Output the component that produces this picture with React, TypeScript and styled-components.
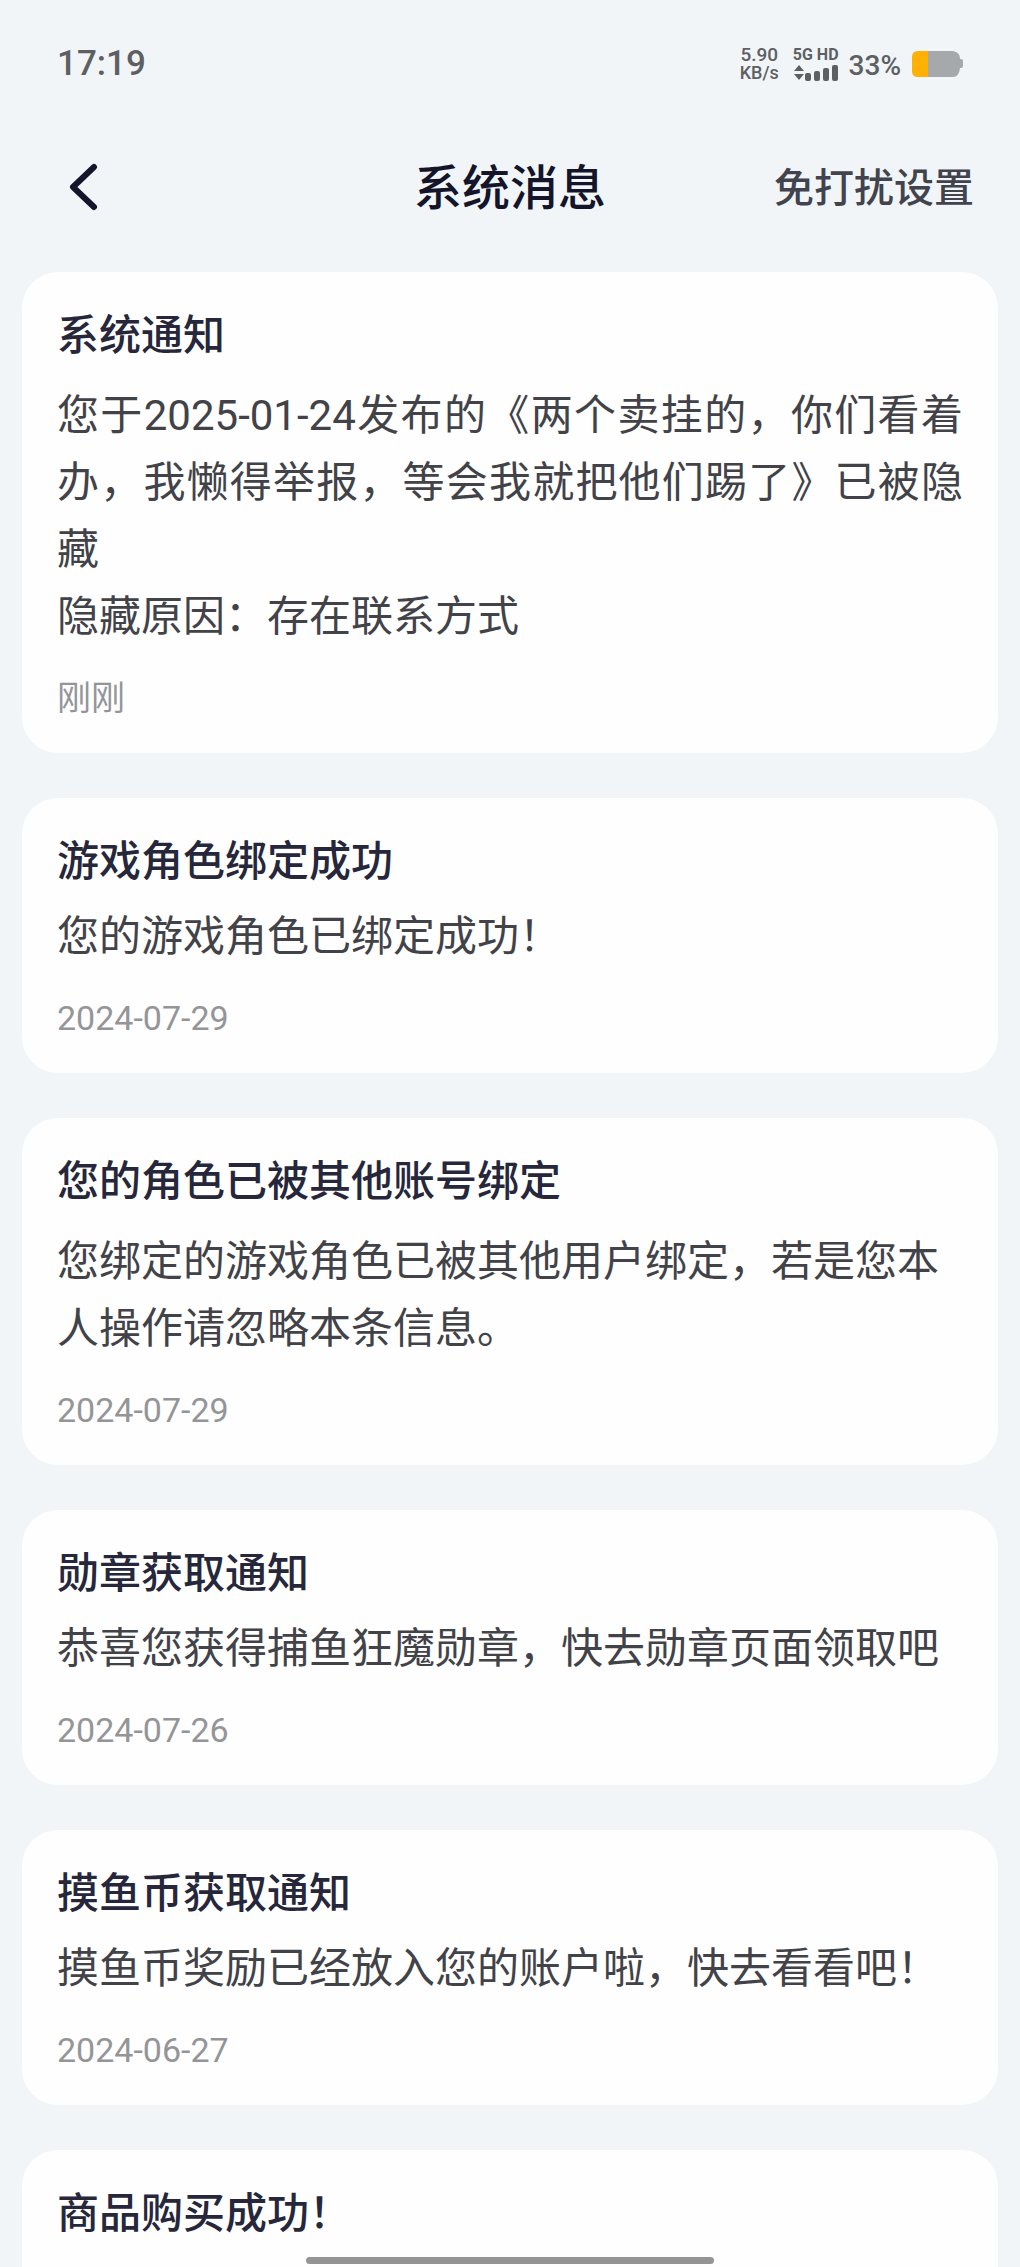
import React from "react";
import styled, { createGlobalStyle } from "styled-components";

const GlobalStyle = createGlobalStyle`
  * { box-sizing: border-box; }
  body {
    margin: 0;
    background: #f1f5f8;
    font-family: Roboto, "Noto Sans CJK SC", sans-serif;
  }
`;

const Screen = styled.div`
  display: flex;
  flex-direction: column;
  height: 100vh;
  overflow: hidden;
  background: #f1f5f8;
`;

const StatusBar = styled.div`
  display: flex;
  flex: none;
  align-items: center;
  justify-content: space-between;
  height: 124px;
  padding: 4px 57px 0;
  color: #5d6063;
  font-weight: 500;
`;

const Clock = styled.time`
  font-size: 35px;
  line-height: 40px;
`;

const StatusGroup = styled.div`
  display: flex;
  align-items: center;
  gap: 10px;
`;

const Speed = styled.div`
  display: flex;
  flex-direction: column;
  align-items: center;
  margin-right: 4px;
  font-size: 18px;
  line-height: 18px;
`;

const SpeedValue = styled.span`
  font-size: 19px;
`;

const Network = styled.div`
  display: flex;
  flex-direction: column;
  align-items: center;
  gap: 2px;
  font-size: 16px;
  font-weight: 700;
  line-height: 16px;

  svg { display: block; }
`;

const Percent = styled.span`
  padding-top: 4px;
  font-size: 28px;
  line-height: 32px;
`;

const Header = styled.header`
  display: grid;
  flex: none;
  grid-template-columns: 1fr auto 1fr;
  align-items: center;
  height: 126px;
  padding: 0 46px;
`;

const BackButton = styled.button`
  justify-self: start;
  display: flex;
  padding: 8px;
  border: 0;
  background: none;
  color: #14152a;
  cursor: pointer;
`;

const PageTitle = styled.h1`
  margin: 0;
  padding-top: 4px;
  color: #14152a;
  font-size: 48px;
  font-weight: 500;
  line-height: 60px;
`;

const SettingsButton = styled.button`
  justify-self: end;
  padding: 4px 0 0;
  border: 0;
  background: none;
  color: #41434e;
  font-family: inherit;
  font-size: 40px;
  font-weight: 500;
  line-height: 60px;
  cursor: pointer;
`;

const MessageList = styled.main`
  display: flex;
  flex: 1;
  flex-direction: column;
  gap: 45px;
  min-height: 0;
  padding: 22px 22px 0;
  overflow-y: auto;
  scrollbar-width: none;
`;

const Card = styled.article`
  flex: none;
  min-height: 275px;
  padding: 34px 35px 35px;
  border-radius: 36px;
  background: #fefefe;
`;

const CardTitle = styled.h2`
  margin: 0;
  color: #26273b;
  font-size: 42px;
  font-weight: 500;
  line-height: 60px;
`;

const CardBody = styled.p<{ $long?: boolean; $justify?: boolean }>`
  margin: ${(p) => (p.$long ? 16 : 11)}px 0 28px;
  color: #424249;
  font-size: 42px;
  line-height: 67px;
  text-align: ${(p) => (p.$justify ? "justify" : "left")};
  white-space: pre-line;
`;

const CardTime = styled.time`
  display: block;
  color: #949598;
  font-size: 34px;
  line-height: 40px;
`;

const HomeIndicator = styled.div`
  position: fixed;
  bottom: 3px;
  left: 30%;
  right: 30%;
  height: 7px;
  border-radius: 4px;
  background: #949494;
`;

interface Message {
  title: string;
  body?: string;
  time?: string;
  long?: boolean;
  justify?: boolean;
}

const messages: Message[] = [
  {
    title: "系统通知",
    body: "您于2025-01-24发布的《两个卖挂的，你们看着办，我懒得举报，等会我就把他们踢了》已被隐藏\n隐藏原因：存在联系方式",
    time: "刚刚",
    long: true,
    justify: true,
  },
  { title: "游戏角色绑定成功", body: "您的游戏角色已绑定成功！", time: "2024-07-29" },
  {
    title: "您的角色已被其他账号绑定",
    body: "您绑定的游戏角色已被其他用户绑定，若是您本人操作请忽略本条信息。",
    time: "2024-07-29",
    long: true,
  },
  { title: "勋章获取通知", body: "恭喜您获得捕鱼狂魔勋章，快去勋章页面领取吧", time: "2024-07-26" },
  { title: "摸鱼币获取通知", body: "摸鱼币奖励已经放入您的账户啦，快去看看吧！", time: "2024-06-27" },
  { title: "商品购买成功！" },
];

const SignalIcon = () => (
  <svg width="44" height="16" viewBox="0 0 44 16" fill="currentColor" aria-hidden="true">
    <path d="M5 0 L10 6 H0 Z M5 15 L10 9 H0 Z" />
    <rect x="11" y="8" width="6" height="8" rx="2" />
    <rect x="20" y="6" width="6" height="10" rx="2" />
    <rect x="29" y="3" width="6" height="13" rx="2" />
    <rect x="38" y="0" width="6" height="16" rx="2" />
  </svg>
);

const BatteryIcon = () => (
  <svg width="52" height="26" viewBox="0 0 52 26" aria-hidden="true">
    <path d="M17 0 H42 Q49 1 49 8 H50 Q52 8 52 10 V15 Q52 17 50 17 H49 Q48 26 42 26 H17 Z" fill="#a6a9ab" />
    <path d="M7 0 H17 V26 H7 Q1 26 1 20 V6 Q1 0 7 0 Z" fill="#ffb000" />
  </svg>
);

export default function App() {
  return (
    <Screen>
      <GlobalStyle />
      <StatusBar>
        <Clock>17:19</Clock>
        <StatusGroup>
          <Speed>
            <SpeedValue>5.90</SpeedValue>
            <span>KB/s</span>
          </Speed>
          <Network>
            <span>5G HD</span>
            <SignalIcon />
          </Network>
          <Percent>33%</Percent>
          <BatteryIcon />
        </StatusGroup>
      </StatusBar>
      <Header>
        <BackButton type="button" aria-label="返回">
          <svg width="48" height="48" viewBox="0 0 48 48" fill="none" aria-hidden="true">
            <path d="M40 4 L19 24 L40 44" stroke="currentColor" strokeWidth="6" strokeLinecap="round" strokeLinejoin="round" />
          </svg>
        </BackButton>
        <PageTitle>系统消息</PageTitle>
        <SettingsButton type="button">免打扰设置</SettingsButton>
      </Header>
      <MessageList>
        {messages.map((m) => (
          <Card key={m.title}>
            <CardTitle>{m.title}</CardTitle>
            {m.body && (
              <CardBody $long={m.long} $justify={m.justify}>
                {m.body}
              </CardBody>
            )}
            {m.time && <CardTime>{m.time}</CardTime>}
          </Card>
        ))}
      </MessageList>
      <HomeIndicator />
    </Screen>
  );
}
